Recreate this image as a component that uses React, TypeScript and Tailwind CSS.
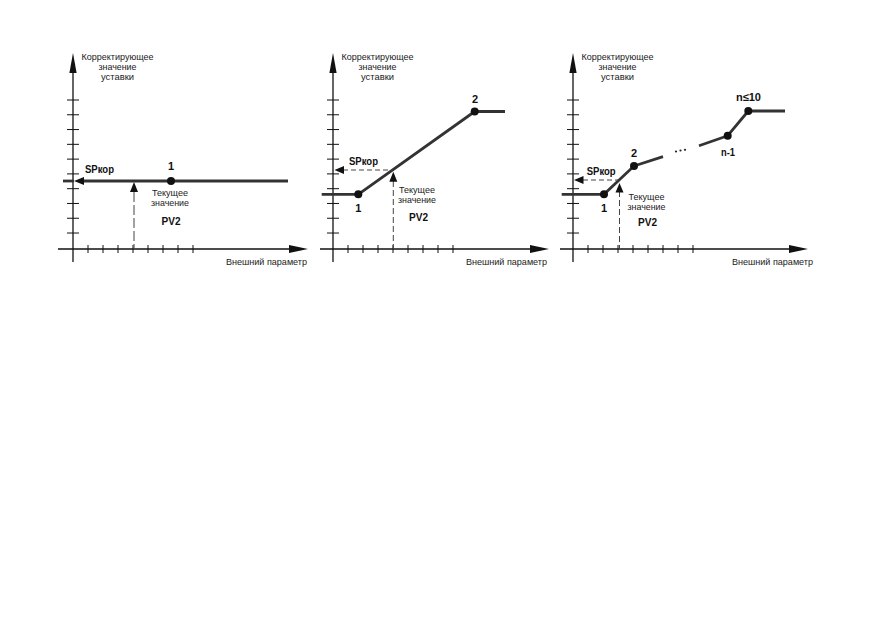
import React from "react";

const AX = "#111";
const LINE = "#333";
const FS = 9.8;

function Axes({ xStart, xTip, labelRight }: { xStart: number; xTip: number; labelRight: number }) {
  const yTicks = Array.from({ length: 10 }, (_, i) => 60 + i * 14.78);
  const xTicks = Array.from({ length: 8 }, (_, i) => 38 + i * 15);
  return (
    <g>
      <line x1={23} y1={30} x2={23} y2={222} stroke={AX} strokeWidth={1.3} />
      <polygon points="23,13 19.4,33 26.6,33" fill={AX} />
      {yTicks.map((y) => (
        <line key={y} x1={17} y1={y} x2={29} y2={y} stroke={AX} strokeWidth={1} />
      ))}
      <line x1={xStart} y1={209} x2={xTip - 17} y2={209} stroke={AX} strokeWidth={1.3} />
      <polygon points={`${xTip},209 ${xTip - 19},205 ${xTip - 19},213`} fill={AX} />
      {xTicks.map((x) => (
        <line key={x} x1={x} y1={205} x2={x} y2={213} stroke={AX} strokeWidth={1} />
      ))}
      <text x={67.5} y={19.6} fontSize={FS} textAnchor="middle" fill="#1a1a1a" textLength={72} lengthAdjust="spacingAndGlyphs">
        Корректирующее
      </text>
      <text x={67.5} y={29.6} fontSize={FS} textAnchor="middle" fill="#1a1a1a" textLength={38} lengthAdjust="spacingAndGlyphs">
        значение
      </text>
      <text x={67.5} y={39.6} fontSize={FS} textAnchor="middle" fill="#1a1a1a" textLength={33} lengthAdjust="spacingAndGlyphs">
        уставки
      </text>
      <text x={labelRight} y={225} fontSize={FS} textAnchor="end" fill="#1a1a1a" textLength={81} lengthAdjust="spacingAndGlyphs">
        Внешний параметр
      </text>
    </g>
  );
}

function Current({ x, y, pvx, pvy }: { x: number; y: number; pvx: number; pvy: number }) {
  return (
    <g>
      <text x={x} y={y} fontSize={FS} textAnchor="middle" fill="#1a1a1a" textLength={36} lengthAdjust="spacingAndGlyphs">
        Текущее
      </text>
      <text x={x} y={y + 10} fontSize={FS} textAnchor="middle" fill="#1a1a1a" textLength={38} lengthAdjust="spacingAndGlyphs">
        значение
      </text>
      <text x={pvx} y={pvy} fontSize={11} fontWeight={700} textAnchor="middle" fill="#111" textLength={19} lengthAdjust="spacingAndGlyphs">
        PV2
      </text>
    </g>
  );
}

function SP({ x, y }: { x: number; y: number }) {
  return (
    <text x={x} y={y} fontSize={11} fontWeight={700} fill="#111" textLength={29} lengthAdjust="spacingAndGlyphs">
      SPкор
    </text>
  );
}

function Num({ x, y, t, w }: { x: number; y: number; t: string; w?: number }) {
  return (
    <text
      x={x}
      y={y}
      fontSize={11}
      fontWeight={700}
      textAnchor="middle"
      fill="#111"
      {...(w ? { textLength: w, lengthAdjust: "spacingAndGlyphs" as const } : {})}
    >
      {t}
    </text>
  );
}

function UpArrow({ x, tip, base }: { x: number; tip: number; base: number }) {
  return (
    <g>
      <line x1={x} y1={base} x2={x} y2={209} stroke="#444" strokeWidth={1} strokeDasharray="10 3" />
      <polygon points={`${x},${tip} ${x - 4},${base} ${x + 4},${base}`} fill="#111" />
    </g>
  );
}

const svgCls = "block shrink-0 overflow-visible font-['Liberation_Sans_Narrow','Liberation_Sans',Arial,sans-serif]";

function Chart1() {
  return (
    <svg width={260} height={240} viewBox="0 0 260 240" className={svgCls}>
      <Axes xStart={8} xTip={258} labelRight={257} />
      <line x1={30} y1={141} x2={238} y2={141} stroke={LINE} strokeWidth={2.8} />
      <line x1={13} y1={141} x2={24} y2={141} stroke={LINE} strokeWidth={2.8} />
      <polygon points="24,141 34,137 34,145" fill="#111" />
      <circle cx={121} cy={141} r={4} fill="#111" />
      <Num x={121} y={130} t="1" />
      <SP x={35} y={133} />
      <UpArrow x={84} tip={142} base={152} />
      <Current x={120} y={156} pvx={121} pvy={185} />
    </svg>
  );
}

function Chart2() {
  return (
    <svg width={240} height={240} viewBox="0 0 240 240" className={svgCls}>
      <Axes xStart={10} xTip={239} labelRight={237} />
      <polyline
        points="11.7,154.3 48.3,154.3 164.7,71.5 195,71.5"
        fill="none"
        stroke={LINE}
        strokeWidth={2.8}
        strokeLinejoin="round"
      />
      <circle cx={48.3} cy={154.3} r={4} fill="#111" />
      <circle cx={164.7} cy={71.5} r={4} fill="#111" />
      <Num x={48.3} y={172} t="1" />
      <Num x={165} y={63} t="2" />
      <line x1={33} y1={130} x2={82.5} y2={130} stroke="#444" strokeWidth={1} strokeDasharray="5 3" />
      <polygon points="24.5,130 34,126 34,134" fill="#111" />
      <SP x={39} y={125} />
      <line x1={83.3} y1={141} x2={83.3} y2={209} stroke="#444" strokeWidth={1} strokeDasharray="6 3" />
      <polygon points="83.3,131.7 79.3,141.7 87.3,141.7" fill="#111" />
      <Current x={107} y={152.5} pvx={108.5} pvy={180.5} />
    </svg>
  );
}

function Chart3() {
  return (
    <svg width={270} height={240} viewBox="0 0 270 240" className={svgCls}>
      <Axes xStart={10} xTip={258} labelRight={263} />
      <polyline
        points="11.7,154.3 54,154.3 84,126 113,116.7"
        fill="none"
        stroke={LINE}
        strokeWidth={2.8}
        strokeLinejoin="round"
      />
      <polyline
        points="149,105.7 177.7,95.7 198.3,71 235,71"
        fill="none"
        stroke={LINE}
        strokeWidth={2.8}
        strokeLinejoin="round"
      />
      <circle cx={126} cy={111.5} r={1.1} fill="#222" />
      <circle cx={130.5} cy={110.5} r={1.1} fill="#222" />
      <circle cx={135} cy={109.8} r={1.1} fill="#222" />
      <circle cx={54} cy={154.3} r={4} fill="#111" />
      <circle cx={84} cy={126} r={4} fill="#111" />
      <circle cx={177.7} cy={95.7} r={4} fill="#111" />
      <circle cx={198.3} cy={71} r={4} fill="#111" />
      <Num x={54} y={172} t="1" />
      <Num x={84} y={117} t="2" />
      <Num x={178} y={115.5} t="n-1" w={14} />
      <Num x={198.5} y={61} t="n≤10" w={25} />
      <line x1={33} y1={140} x2={68.5} y2={140} stroke="#444" strokeWidth={1} strokeDasharray="5 3" />
      <polygon points="24,140 33.5,136 33.5,144" fill="#111" />
      <SP x={36.7} y={135} />
      <line x1={69.5} y1={151} x2={69.5} y2={209} stroke="#444" strokeWidth={1} strokeDasharray="6 3" />
      <polygon points="69.5,143 65.5,152.5 73.5,152.5" fill="#111" />
      <Current x={96.5} y={159.5} pvx={97.5} pvy={185.5} />
    </svg>
  );
}

export default function App() {
  return (
    <div className="w-[872px] h-[618px] bg-white">
      <div className="flex items-start pl-[50px] pt-[40px]">
        <Chart1 />
        <Chart2 />
        <Chart3 />
      </div>
    </div>
  );
}
